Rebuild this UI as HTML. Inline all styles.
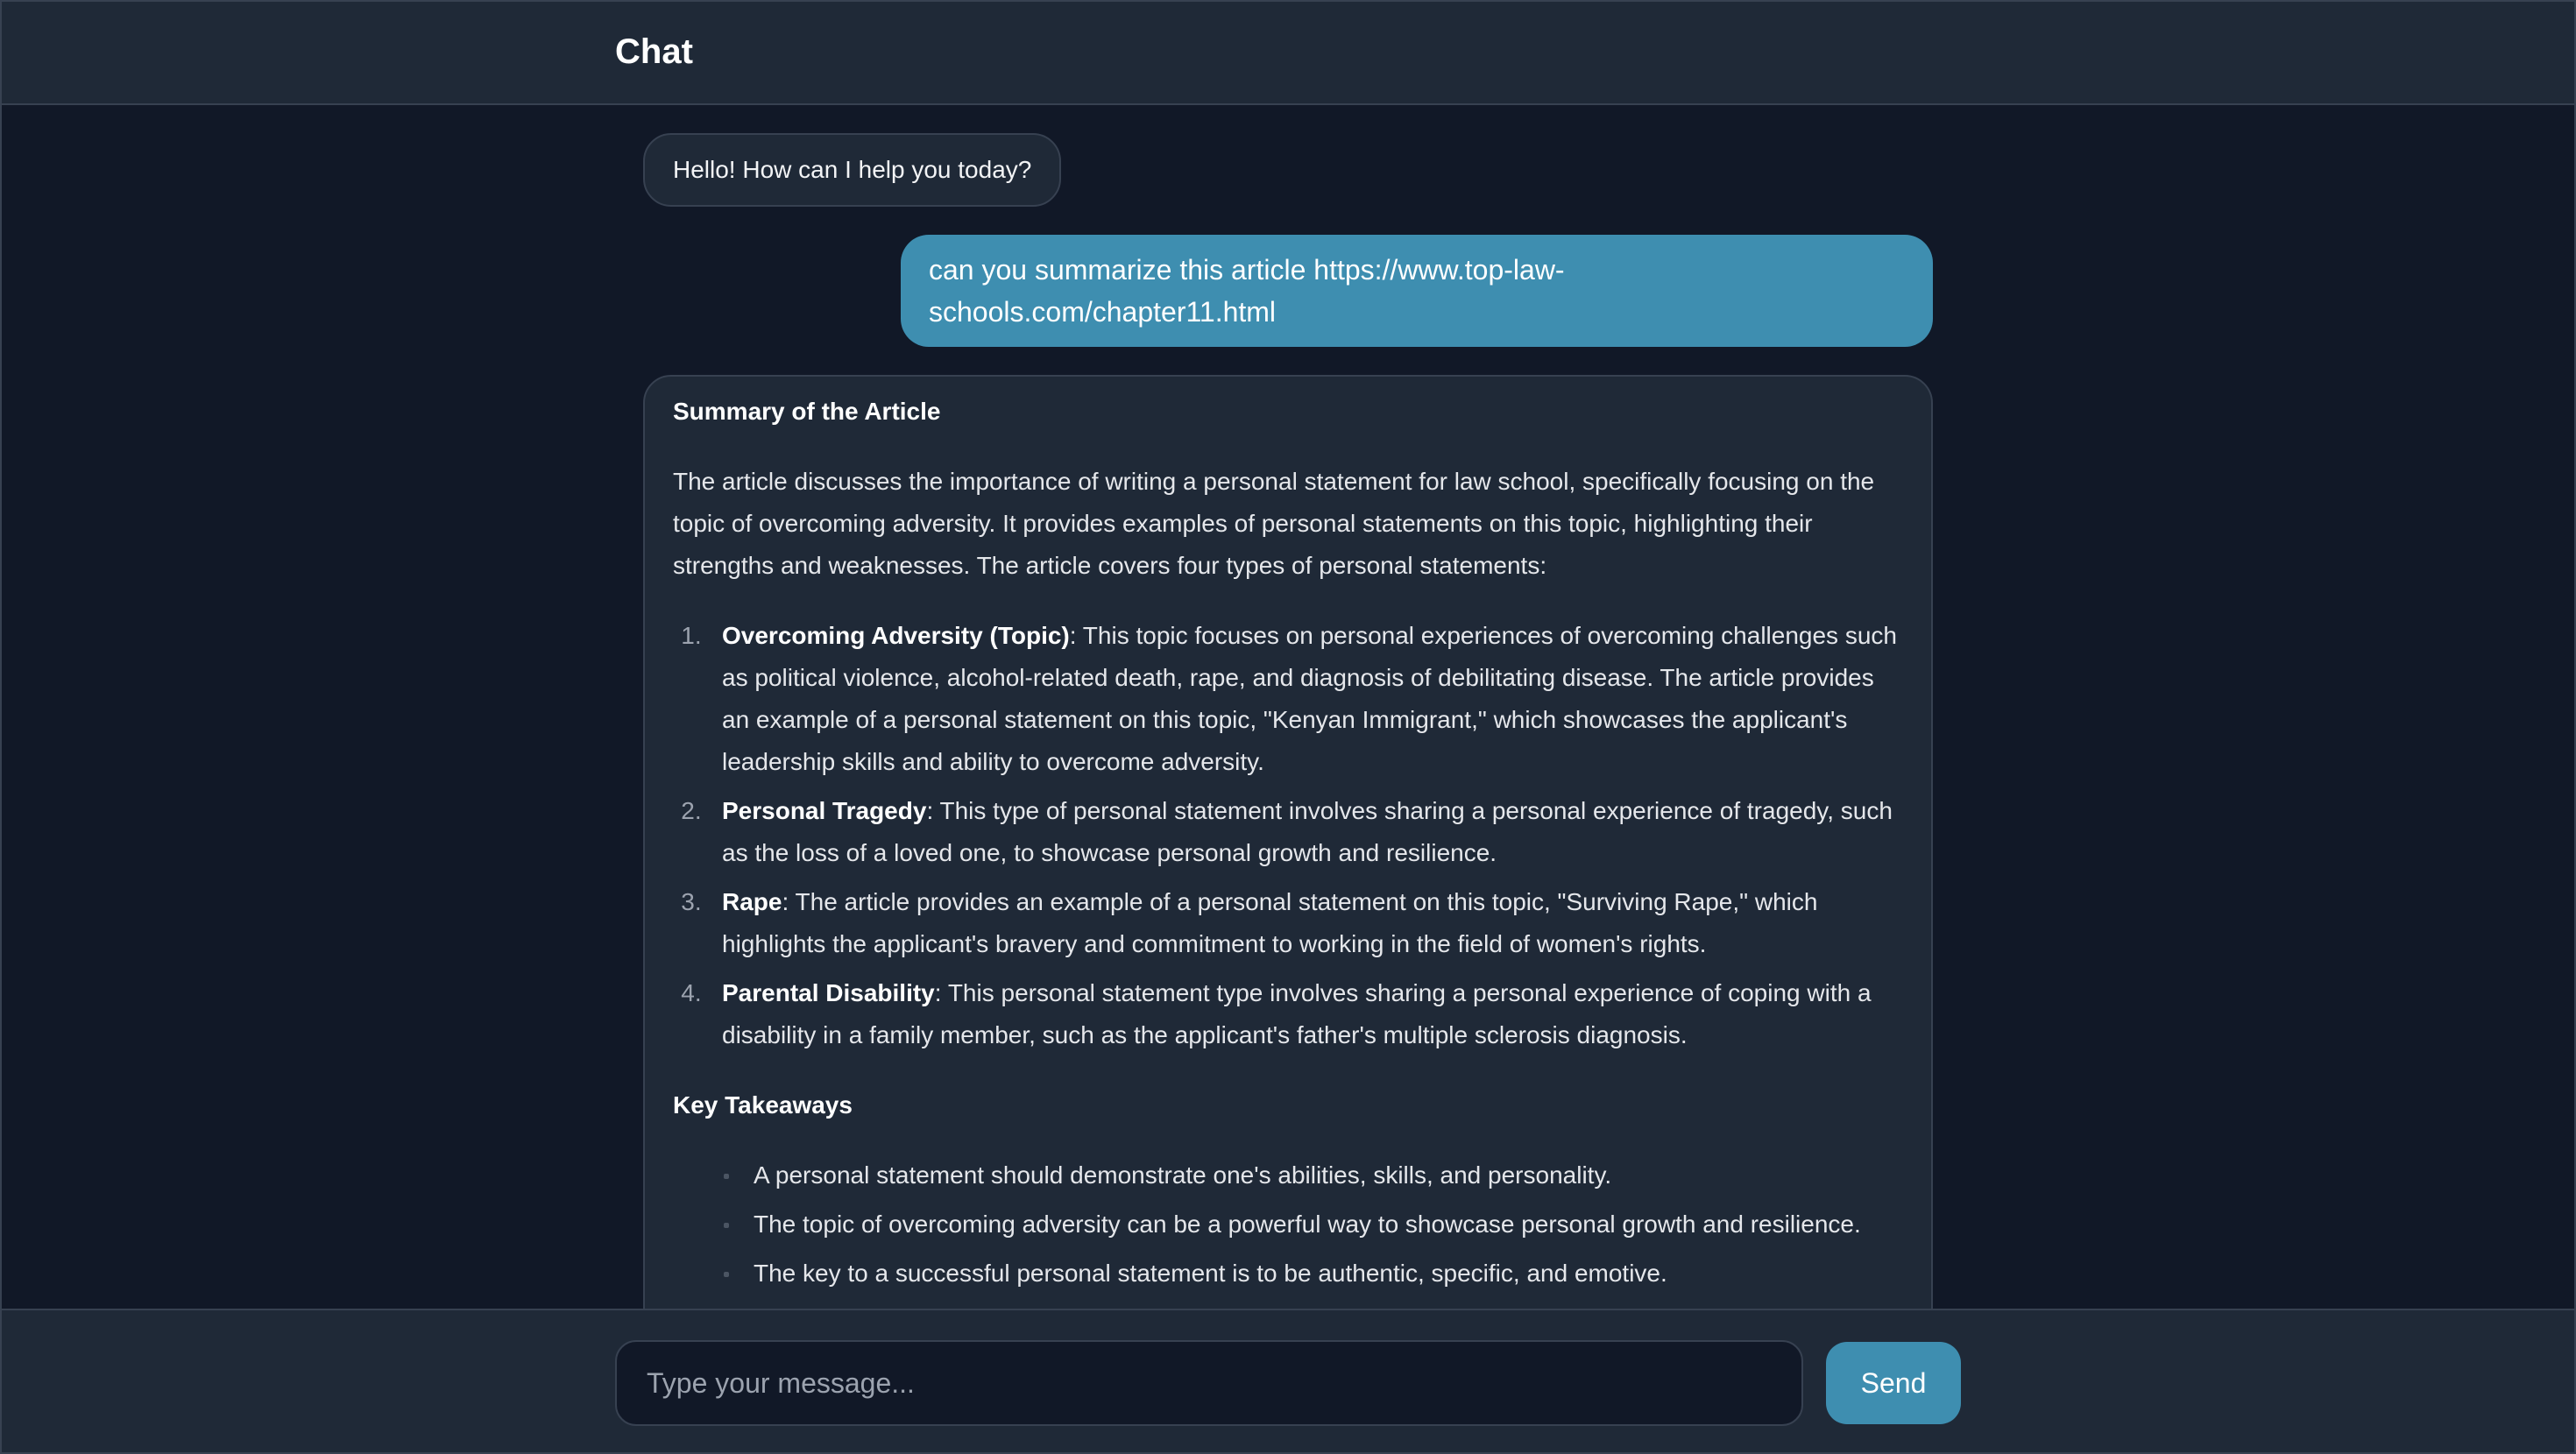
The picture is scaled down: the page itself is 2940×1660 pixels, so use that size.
<!DOCTYPE html>
<html><head><meta charset="utf-8"><style>
html{zoom:2}
*{box-sizing:border-box;margin:0;padding:0}
body{width:1470px;height:830px;overflow:hidden;background:#111827;font-family:"Liberation Sans",Arial,sans-serif;color:#e5e7eb;position:relative}
.frame{position:absolute;inset:0;border:1px solid #374151;pointer-events:none;z-index:10}
header{height:60px;background:#1f2937;border-bottom:1px solid #374151}
header h1{width:768px;margin:0 auto;font-size:20px;line-height:59px;color:#fff;font-weight:bold}
main{position:absolute;top:60px;left:0;right:0;bottom:83px;overflow:hidden}
.wrap{width:768px;margin:0 auto;padding:16px}
.bot{display:inline-block;background:#1f2937;border:1px solid #374151;border-radius:16px;padding:8px 16px;font-size:14px;line-height:24px;color:#f3f4f6}
.userrow{display:flex;justify-content:flex-end;margin-top:16px}
.user{width:589px;background:#3e8eb0;border-radius:16px;padding:8px 16px;font-size:16px;line-height:24px;color:#fff}
.asst{margin-top:16px;background:#1f2937;border:1px solid #374151;border-radius:16px;padding:8px 16px;font-size:14px;line-height:24px}
.asst h3{font-size:14px;color:#fff;font-weight:bold;line-height:24px}
.asst p,.asst ol,.asst ul{margin-top:16px}
.asst ol{padding-left:28px}
.asst ol li{margin-bottom:4px}
.asst ol li::marker{color:#9ca3af;content:counter(list-item) ".\00a0\00a0\00a0"}
.asst ul{padding-left:46px;list-style:none}
.asst ul li{margin-bottom:4px;position:relative}
.asst ul li::before{content:"";position:absolute;left:-17px;top:11px;width:3px;height:3px;background:#4b5563;border-radius:1px}
.asst b{color:#fff}
footer{position:absolute;bottom:0;left:0;right:0;height:83px;background:#1f2937;border-top:1px solid #374151}
.f{width:768px;margin:0 auto;display:flex;gap:13px;padding-top:17px}
.inp{flex:1;height:49px;background:#111827;border:1px solid #374151;border-radius:12px;font-size:16px;color:#9ca3af;padding-left:17px;line-height:47px}
.send{width:77px;height:47px;margin-top:1px;background:#3e8eb0;border-radius:12px;color:#fff;font-size:16px;text-align:center;line-height:47px}
</style></head><body>
<div class="frame"></div>
<header><h1>Chat</h1></header>
<main><div class="wrap">
<div class="bot">Hello! How can I help you today?</div>
<div class="userrow"><div class="user">can you summarize this article https://www.top-law-schools.com/chapter11.html</div></div>
<div class="asst">
<h3>Summary of the Article</h3>
<p>The article discusses the importance of writing a personal statement for law school, specifically focusing on the topic of overcoming adversity. It provides examples of personal statements on this topic, highlighting their strengths and weaknesses. The article covers four types of personal statements:</p>
<ol>
<li><b>Overcoming Adversity (Topic)</b>: This topic focuses on personal experiences of overcoming challenges such as political violence, alcohol-related death, rape, and diagnosis of debilitating disease. The article provides an example of a personal statement on this topic, "Kenyan Immigrant," which showcases the applicant's leadership skills and ability to overcome adversity.</li>
<li><b>Personal Tragedy</b>: This type of personal statement involves sharing a personal experience of tragedy, such as the loss of a loved one, to showcase personal growth and resilience.</li>
<li><b>Rape</b>: The article provides an example of a personal statement on this topic, "Surviving Rape," which highlights the applicant's bravery and commitment to working in the field of women's rights.</li>
<li><b>Parental Disability</b>: This personal statement type involves sharing a personal experience of coping with a disability in a family member, such as the applicant's father's multiple sclerosis diagnosis.</li>
</ol>
<h3 style="margin-top:16px">Key Takeaways</h3>
<ul>
<li>A personal statement should demonstrate one's abilities, skills, and personality.</li>
<li>The topic of overcoming adversity can be a powerful way to showcase personal growth and resilience.</li>
<li>The key to a successful personal statement is to be authentic, specific, and emotive.</li>
</ul>
<p>In conclusion, the article provides guidance on writing a personal statement.</p>
</div>
</div></main>
<footer><div class="f"><div class="inp">Type your message...</div><div class="send">Send</div></div></footer>
</body></html>
